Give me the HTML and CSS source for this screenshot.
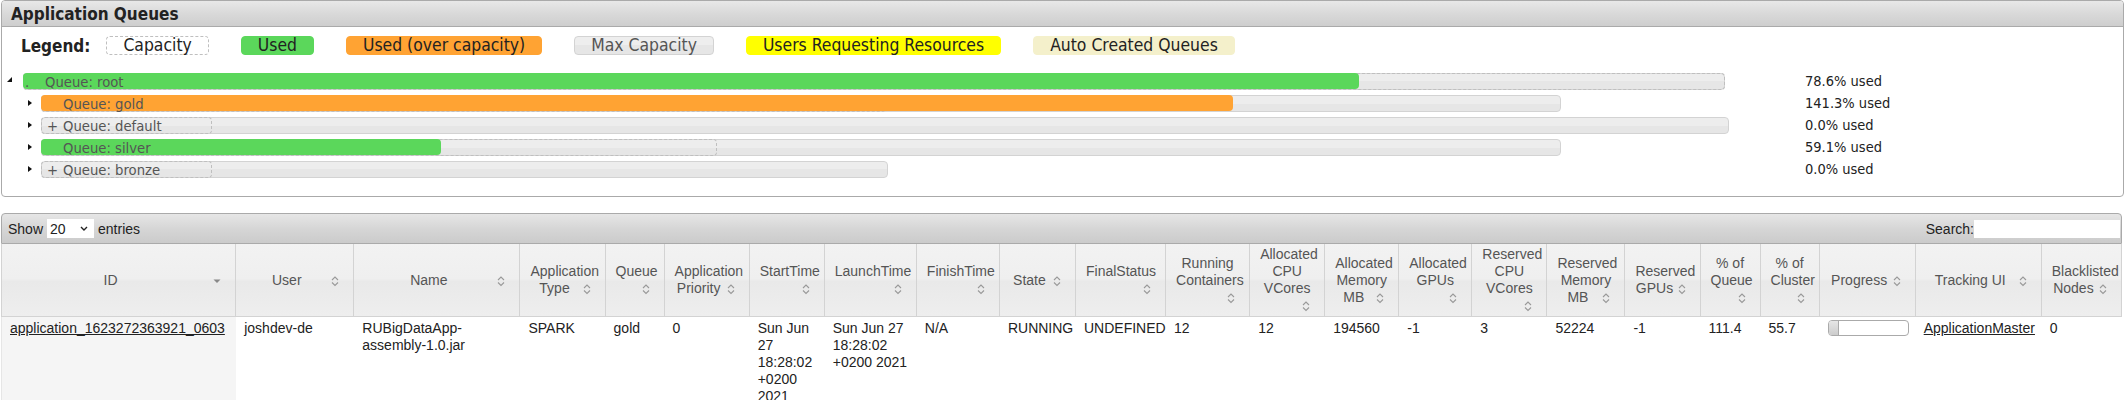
FILE: index.html
```html
<!DOCTYPE html>
<html lang="en">
<head>
<meta charset="utf-8">
<title>Applications</title>
<link rel="stylesheet" href="styles.css">
</head>
<body>
<div class="qbox">
  <div class="qhead">Application Queues</div>
  <div class="legend">
    <span class="lg-title">Legend:</span>
    <span class="lg lg-cap">Capacity</span>
    <span class="lg lg-used">Used</span>
    <span class="lg lg-over">Used (over capacity)</span>
    <span class="lg lg-max">Max Capacity</span>
    <span class="lg lg-user">Users Requesting Resources</span>
    <span class="lg lg-auto">Auto Created Queues</span>
  </div>
  <div class="tree">
    <div class="qrow">
      <div class="qleft"><span class="tri open"></span>
        <div class="qbar" style="width:1702px">
          <span class="qgiven" style="width:1702px"></span>
          <span class="qused under" style="width:1336px"></span>
          <span class="qlabel"><span class="mark dot">.</span>Queue: root</span>
        </div>
      </div>
      <span class="qstats">78.6% used</span>
    </div>
    <div class="qrow">
      <div class="qleft"><span class="tri closed"></span>
        <div class="qbar" style="width:1520px">
          <span class="qgiven" style="width:845px"></span>
          <span class="qused over" style="width:1192px"></span>
          <span class="qlabel"><span class="mark"></span>Queue: gold</span>
        </div>
      </div>
      <span class="qstats">141.3% used</span>
    </div>
    <div class="qrow">
      <div class="qleft"><span class="tri closed"></span>
        <div class="qbar" style="width:1688px">
          <span class="qgiven" style="width:171px"></span>
          <span class="qlabel"><span class="mark plus">+</span>Queue: default</span>
        </div>
      </div>
      <span class="qstats">0.0% used</span>
    </div>
    <div class="qrow">
      <div class="qleft"><span class="tri closed"></span>
        <div class="qbar" style="width:1520px">
          <span class="qgiven" style="width:676px"></span>
          <span class="qused under" style="width:400px"></span>
          <span class="qlabel"><span class="mark"></span>Queue: silver</span>
        </div>
      </div>
      <span class="qstats">59.1% used</span>
    </div>
    <div class="qrow">
      <div class="qleft"><span class="tri closed"></span>
        <div class="qbar" style="width:847px">
          <span class="qgiven" style="width:171px"></span>
          <span class="qlabel"><span class="mark plus">+</span>Queue: bronze</span>
        </div>
      </div>
      <span class="qstats">0.0% used</span>
    </div>
  </div>
</div>

<div class="dt">
  <div class="toolbar">
    <div class="len">Show <span class="sel">20<svg class="chev" viewBox="0 0 8 5" width="8" height="5"><path d="M1 1 L4 4 L7 1" fill="none" stroke="#222" stroke-width="1.4"/></svg></span> entries</div>
    <div class="search">Search:<span class="inp"></span></div>
  </div>
  <table class="apps">
    <colgroup>
      <col class="w235"><col class="w118"><col class="w166"><col class="w85"><col class="w59"><col class="w85"><col class="w75"><col class="w92"><col class="w83"><col class="w76"><col class="w90"><col class="w84"><col class="w75"><col class="w74"><col class="w73"><col class="w75"><col class="w78"><col class="w75"><col class="w60"><col class="w59"><col class="w96"><col class="w126"><col class="w80">
    </colgroup>
    <thead>
      <tr>
        <th><div class="sw">ID<span class="si"><svg viewBox="0 0 16 16" width="16" height="16"><path d="M4.5 6.5 H11.5 L8 10 Z" fill="#888"/></svg></span></div></th>
        <th><div class="sw">User<span class="si"><svg viewBox="0 0 16 16" width="16" height="16"><path d="M5 7 L8 4 L11 7 M5 9.5 L8 12.5 L11 9.5" fill="none" stroke="#999" stroke-width="1.1"/></svg></span></div></th>
        <th><div class="sw">Name<span class="si"><svg viewBox="0 0 16 16" width="16" height="16"><path d="M5 7 L8 4 L11 7 M5 9.5 L8 12.5 L11 9.5" fill="none" stroke="#999" stroke-width="1.1"/></svg></span></div></th>
        <th><div class="sw">Application Type<span class="si"><svg viewBox="0 0 16 16" width="16" height="16"><path d="M5 7 L8 4 L11 7 M5 9.5 L8 12.5 L11 9.5" fill="none" stroke="#999" stroke-width="1.1"/></svg></span></div></th>
        <th><div class="sw">Queue<span class="si"><svg viewBox="0 0 16 16" width="16" height="16"><path d="M5 7 L8 4 L11 7 M5 9.5 L8 12.5 L11 9.5" fill="none" stroke="#999" stroke-width="1.1"/></svg></span></div></th>
        <th><div class="sw">Application Priority<span class="si"><svg viewBox="0 0 16 16" width="16" height="16"><path d="M5 7 L8 4 L11 7 M5 9.5 L8 12.5 L11 9.5" fill="none" stroke="#999" stroke-width="1.1"/></svg></span></div></th>
        <th><div class="sw">StartTime<span class="si"><svg viewBox="0 0 16 16" width="16" height="16"><path d="M5 7 L8 4 L11 7 M5 9.5 L8 12.5 L11 9.5" fill="none" stroke="#999" stroke-width="1.1"/></svg></span></div></th>
        <th><div class="sw">LaunchTime<span class="si"><svg viewBox="0 0 16 16" width="16" height="16"><path d="M5 7 L8 4 L11 7 M5 9.5 L8 12.5 L11 9.5" fill="none" stroke="#999" stroke-width="1.1"/></svg></span></div></th>
        <th><div class="sw">FinishTime<span class="si"><svg viewBox="0 0 16 16" width="16" height="16"><path d="M5 7 L8 4 L11 7 M5 9.5 L8 12.5 L11 9.5" fill="none" stroke="#999" stroke-width="1.1"/></svg></span></div></th>
        <th><div class="sw">State<span class="si"><svg viewBox="0 0 16 16" width="16" height="16"><path d="M5 7 L8 4 L11 7 M5 9.5 L8 12.5 L11 9.5" fill="none" stroke="#999" stroke-width="1.1"/></svg></span></div></th>
        <th><div class="sw">FinalStatus<span class="si"><svg viewBox="0 0 16 16" width="16" height="16"><path d="M5 7 L8 4 L11 7 M5 9.5 L8 12.5 L11 9.5" fill="none" stroke="#999" stroke-width="1.1"/></svg></span></div></th>
        <th><div class="sw">Running Containers<span class="si"><svg viewBox="0 0 16 16" width="16" height="16"><path d="M5 7 L8 4 L11 7 M5 9.5 L8 12.5 L11 9.5" fill="none" stroke="#999" stroke-width="1.1"/></svg></span></div></th>
        <th><div class="sw">Allocated CPU VCores<span class="si"><svg viewBox="0 0 16 16" width="16" height="16"><path d="M5 7 L8 4 L11 7 M5 9.5 L8 12.5 L11 9.5" fill="none" stroke="#999" stroke-width="1.1"/></svg></span></div></th>
        <th><div class="sw">Allocated Memory MB<span class="si"><svg viewBox="0 0 16 16" width="16" height="16"><path d="M5 7 L8 4 L11 7 M5 9.5 L8 12.5 L11 9.5" fill="none" stroke="#999" stroke-width="1.1"/></svg></span></div></th>
        <th><div class="sw">Allocated GPUs<span class="si"><svg viewBox="0 0 16 16" width="16" height="16"><path d="M5 7 L8 4 L11 7 M5 9.5 L8 12.5 L11 9.5" fill="none" stroke="#999" stroke-width="1.1"/></svg></span></div></th>
        <th><div class="sw">Reserved CPU VCores<span class="si"><svg viewBox="0 0 16 16" width="16" height="16"><path d="M5 7 L8 4 L11 7 M5 9.5 L8 12.5 L11 9.5" fill="none" stroke="#999" stroke-width="1.1"/></svg></span></div></th>
        <th><div class="sw">Reserved Memory MB<span class="si"><svg viewBox="0 0 16 16" width="16" height="16"><path d="M5 7 L8 4 L11 7 M5 9.5 L8 12.5 L11 9.5" fill="none" stroke="#999" stroke-width="1.1"/></svg></span></div></th>
        <th><div class="sw">Reserved GPUs<span class="si"><svg viewBox="0 0 16 16" width="16" height="16"><path d="M5 7 L8 4 L11 7 M5 9.5 L8 12.5 L11 9.5" fill="none" stroke="#999" stroke-width="1.1"/></svg></span></div></th>
        <th><div class="sw">% of Queue<span class="si"><svg viewBox="0 0 16 16" width="16" height="16"><path d="M5 7 L8 4 L11 7 M5 9.5 L8 12.5 L11 9.5" fill="none" stroke="#999" stroke-width="1.1"/></svg></span></div></th>
        <th><div class="sw">% of Cluster<span class="si"><svg viewBox="0 0 16 16" width="16" height="16"><path d="M5 7 L8 4 L11 7 M5 9.5 L8 12.5 L11 9.5" fill="none" stroke="#999" stroke-width="1.1"/></svg></span></div></th>
        <th><div class="sw">Progress<span class="si"><svg viewBox="0 0 16 16" width="16" height="16"><path d="M5 7 L8 4 L11 7 M5 9.5 L8 12.5 L11 9.5" fill="none" stroke="#999" stroke-width="1.1"/></svg></span></div></th>
        <th><div class="sw">Tracking UI<span class="si"><svg viewBox="0 0 16 16" width="16" height="16"><path d="M5 7 L8 4 L11 7 M5 9.5 L8 12.5 L11 9.5" fill="none" stroke="#999" stroke-width="1.1"/></svg></span></div></th>
        <th><div class="sw">Blacklisted Nodes<span class="si"><svg viewBox="0 0 16 16" width="16" height="16"><path d="M5 7 L8 4 L11 7 M5 9.5 L8 12.5 L11 9.5" fill="none" stroke="#999" stroke-width="1.1"/></svg></span></div></th>
      </tr>
    </thead>
    <tbody>
      <tr>
        <td class="sorted"><a href="#">application_1623272363921_0603</a></td>
        <td>joshdev-de</td>
        <td>RUBigDataApp-assembly-1.0.jar</td>
        <td>SPARK</td>
        <td>gold</td>
        <td>0</td>
        <td>Sun Jun 27 18:28:02 +0200 2021</td>
        <td>Sun Jun 27 18:28:02 +0200 2021</td>
        <td>N/A</td>
        <td>RUNNING</td>
        <td>UNDEFINED</td>
        <td>12</td>
        <td>12</td>
        <td>194560</td>
        <td>-1</td>
        <td>3</td>
        <td>52224</td>
        <td>-1</td>
        <td>111.4</td>
        <td>55.7</td>
        <td><div class="pbar"><div class="pval" style="width:10px"></div></div></td>
        <td><a href="#">ApplicationMaster</a></td>
        <td>0</td>
      </tr>
    </tbody>
  </table>
</div>
</body>
</html>
```

FILE: styles.css
```css
* { box-sizing: border-box; }

body {
  margin: 0;
  background: #fff;
  color: #222;
  font-family: "Liberation Sans", Arial, sans-serif;
}

/* ---------- Application Queues box ---------- */
.qbox {
  margin-left: 1px;
  width: 2123px;
  border: 1px solid #aaa;
  border-radius: 4px;
  background: #fff;
  overflow: hidden;
  font-family: "DejaVu Sans Condensed", "DejaVu Sans", sans-serif;
}

.qhead {
  height: 26px;
  padding: 1px 0 0 9px;
  line-height: 25px;
  font-size: 17px;
  font-weight: bold;
  color: #222;
  background: linear-gradient(#e8e8e8, #d9d9d9 50%, #cecece);
  border-bottom: 1px solid #aaa;
}

.legend {
  display: flex;
  align-items: center;
  height: 19px;
  margin: 9px 0 0 19px;
  font-size: 17.4px;
  color: #222;
}

.lg-title {
  font-weight: bold;
  font-size: 17px;
  margin-right: 16px;
}

.lg {
  height: 19px;
  line-height: 17px;
  padding: 0 16px;
  margin-right: 32px;
  border: 1px solid transparent;
  border-radius: 4px;
  white-space: nowrap;
}

.lg-cap { border: 1px dashed #bfbfbf; }
.lg-used { background: #5bd75b; border-color: #5bd75b; }
.lg-over { background: #ffa333; border-color: #ffa333; }
.lg-max {
  color: #555;
  border-color: #d3d3d3;
  background: linear-gradient(#eeeeee 50%, #e6e6e6 50%);
}
.lg-user { background: #ffff00; border-color: #ffff00; }
.lg-auto { background: #f4f0cb; border-color: #f4f0cb; }

.tree {
  padding: 15px 0 16px 0;
}

.qrow {
  display: flex;
  align-items: center;
  height: 22px;
}

.qleft {
  width: 1803px;
  flex: none;
  display: flex;
  align-items: center;
}

.tri {
  width: 0;
  height: 0;
  flex: none;
}

.tri.open {
  margin: -3px 11px 0 5px;
  border-left: 5px solid transparent;
  border-bottom: 5px solid #111;
}

.tri.closed {
  margin: 0 9px 0 26px;
  border-top: 3.5px solid transparent;
  border-bottom: 3.5px solid transparent;
  border-left: 4px solid #111;
}

.qbar {
  position: relative;
  height: 17px;
  flex: none;
  border: 1px solid #d3d3d3;
  border-radius: 4px;
  background: linear-gradient(#ededed 50%, #e6e6e6 50%);
}

.qgiven {
  position: absolute;
  left: -1px;
  top: -1px;
  height: 17px;
  border: 1px dashed #bfbfbf;
  border-radius: 4px;
}

.qused {
  position: absolute;
  left: -1px;
  top: -1px;
  height: 16px;
  border-radius: 4px;
}

.qused.under { background: #5bd75b; }
.qused.over { background: #ffa333; }

.qlabel {
  position: relative;
  display: flex;
  align-items: center;
  height: 15px;
  padding-left: 1px;
  font-size: 14.7px;
  line-height: 15px;
  color: #555;
  white-space: nowrap;
}

.mark {
  display: inline-block;
  width: 20px;
}

.mark.plus {
  width: 20px;
  padding-left: 4px;
}

.qstats {
  font-size: 14.5px;
  color: #222;
  white-space: nowrap;
}

/* ---------- Applications table ---------- */
.dt {
  margin: 16px 0 0 1px;
  width: 2121px;
}

.toolbar {
  display: flex;
  align-items: center;
  justify-content: space-between;
  height: 31px;
  padding: 0 1px 0 6px;
  border: 1px solid #aaa;
  border-radius: 4px 4px 0 0;
  background: linear-gradient(#e6e6e6, #d6d6d6 50%, #cbcbcb);
  font-size: 14px;
  color: #222;
}

.len, .search {
  display: flex;
  align-items: center;
}

.sel {
  display: inline-flex;
  align-items: center;
  justify-content: space-between;
  width: 47px;
  height: 19px;
  margin: 0 4px 0 4px;
  padding: 0 6px 0 3px;
  background: #fff;
  font-size: 14px;
}

.chev { display: block; }

.inp {
  display: inline-block;
  width: 146px;
  height: 18px;
  background: #fff;
}

.apps {
  width: 2121px;
  table-layout: fixed;
  border-collapse: separate;
  border-spacing: 0;
  font-size: 14px;
}

.w235 { width: 235px; }
.w118 { width: 118px; }
.w166 { width: 166px; }
.w85 { width: 85px; }
.w59 { width: 59px; }
.w75 { width: 75px; }
.w92 { width: 92px; }
.w83 { width: 83px; }
.w76 { width: 76px; }
.w90 { width: 90px; }
.w84 { width: 84px; }
.w74 { width: 74px; }
.w73 { width: 73px; }
.w78 { width: 78px; }
.w60 { width: 60px; }
.w96 { width: 96px; }
.w126 { width: 126px; }
.w80 { width: 80px; }

.apps th {
  padding: 2px 10px 2px 10px;
  font-weight: normal;
  line-height: 17px;
  color: #555;
  text-align: center;
  vertical-align: middle;
  background: linear-gradient(#f2f2f2 0, #efefef 48%, #e9e9e9 52%, #eeeeee 100%);
  border-right: 1px solid #d3d3d3;
  border-bottom: 1px solid #d3d3d3;
}

.apps th:first-child { border-left: 1px solid #d3d3d3; }

.sw { overflow-wrap: normal; }

.si {
  float: right;
  width: 16px;
  height: 16px;
  margin-top: 1px;
}

.si svg { display: block; }

.apps td {
  padding: 3px 8px;
  line-height: 17px;
  vertical-align: top;
  color: #222;
  text-align: left;
}

.apps td.sorted {
  background: #f5f5f5;
  border-left: 1px solid #e6e6e6;
}

.apps a {
  color: #222;
  text-decoration: underline;
}

.pbar {
  width: 81px;
  height: 16px;
  border: 1px solid #aaa;
  border-radius: 4px;
  background: #fff;
  overflow: hidden;
}

.pval {
  height: 100%;
  background: linear-gradient(#e6e6e6, #cccccc);
  border-right: 1px solid #aaa;
}
```
